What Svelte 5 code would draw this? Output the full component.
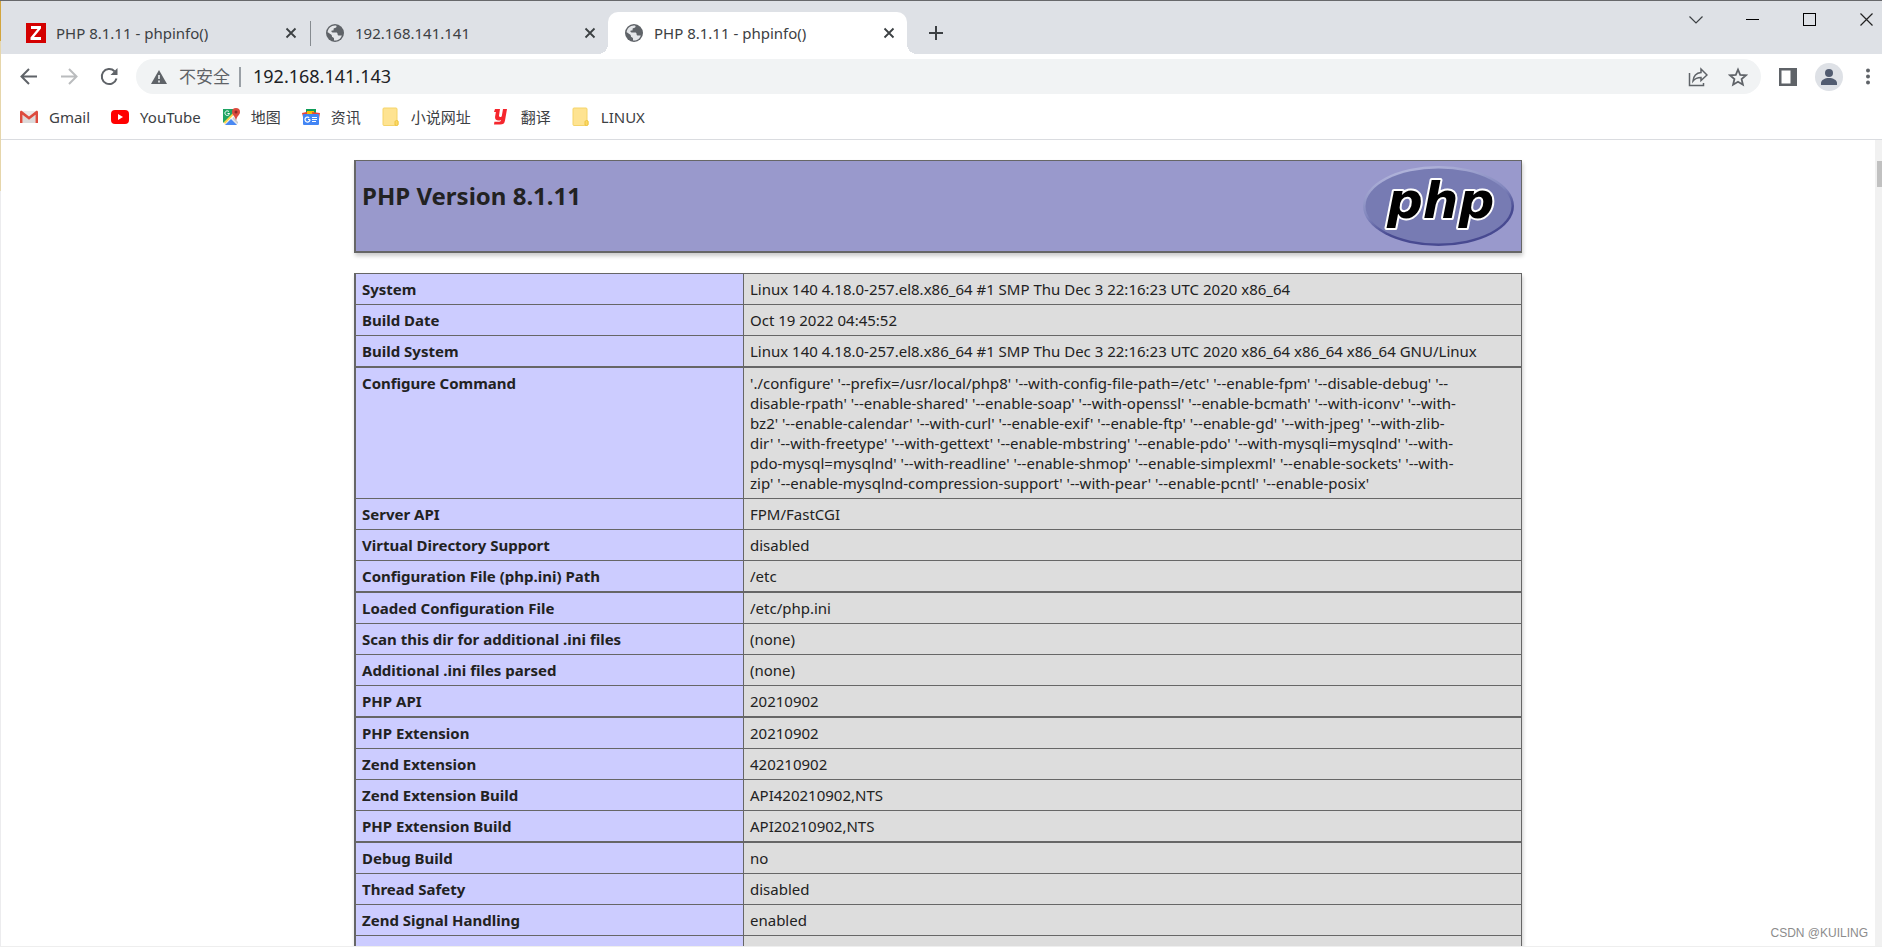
<script lang="ts">
	type Tab = { title: string; icon: 'zabbix' | 'globe'; active: boolean };
	type Bookmark = { label: string; icon: string };
	type Row = { name: string; value: string; thick?: boolean };

	let tabs: Tab[] = $state([
		{ title: 'PHP 8.1.11 - phpinfo()', icon: 'zabbix', active: false },
		{ title: '192.168.141.141', icon: 'globe', active: false },
		{ title: 'PHP 8.1.11 - phpinfo()', icon: 'globe', active: true }
	]);

	let address = $state('192.168.141.143');

	const bookmarks: Bookmark[] = [
		{ label: 'Gmail', icon: 'gmail' },
		{ label: 'YouTube', icon: 'youtube' },
		{ label: '地图', icon: 'maps' },
		{ label: '资讯', icon: 'news' },
		{ label: '小说网址', icon: 'folder' },
		{ label: '翻译', icon: 'youdao' },
		{ label: 'LINUX', icon: 'folder' }
	];

	const configure = [
		`'./configure' '--prefix=/usr/local/php8' '--with-config-file-path=/etc' '--enable-fpm' '--disable-debug' '--`,
		`disable-rpath' '--enable-shared' '--enable-soap' '--with-openssl' '--enable-bcmath' '--with-iconv' '--with-`,
		`bz2' '--enable-calendar' '--with-curl' '--enable-exif' '--enable-ftp' '--enable-gd' '--with-jpeg' '--with-zlib-`,
		`dir' '--with-freetype' '--with-gettext' '--enable-mbstring' '--enable-pdo' '--with-mysqli=mysqlnd' '--with-`,
		`pdo-mysql=mysqlnd' '--with-readline' '--enable-shmop' '--enable-simplexml' '--enable-sockets' '--with-`,
		`zip' '--enable-mysqlnd-compression-support' '--with-pear' '--enable-pcntl' '--enable-posix'`
	].join('\n');

	const rows: Row[] = [
		{ name: 'System', value: 'Linux 140 4.18.0-257.el8.x86_64 #1 SMP Thu Dec 3 22:16:23 UTC 2020 x86_64' },
		{ name: 'Build Date', value: 'Oct 19 2022 04:45:52' },
		{
			name: 'Build System',
			value: 'Linux 140 4.18.0-257.el8.x86_64 #1 SMP Thu Dec 3 22:16:23 UTC 2020 x86_64 x86_64 x86_64 GNU/Linux',
			thick: true
		},
		{ name: 'Configure Command', value: configure },
		{ name: 'Server API', value: 'FPM/FastCGI' },
		{ name: 'Virtual Directory Support', value: 'disabled' },
		{ name: 'Configuration File (php.ini) Path', value: '/etc', thick: true },
		{ name: 'Loaded Configuration File', value: '/etc/php.ini' },
		{ name: 'Scan this dir for additional .ini files', value: '(none)' },
		{ name: 'Additional .ini files parsed', value: '(none)' },
		{ name: 'PHP API', value: '20210902', thick: true },
		{ name: 'PHP Extension', value: '20210902' },
		{ name: 'Zend Extension', value: '420210902' },
		{ name: 'Zend Extension Build', value: 'API420210902,NTS' },
		{ name: 'PHP Extension Build', value: 'API20210902,NTS', thick: true },
		{ name: 'Debug Build', value: 'no' },
		{ name: 'Thread Safety', value: 'disabled' },
		{ name: 'Zend Signal Handling', value: 'enabled' },
		{ name: 'Zend Memory Manager', value: 'enabled' }
	];

	function selectTab(index: number) {
		tabs.forEach((tab, i) => (tab.active = i === index));
	}

	function closeTab(index: number) {
		tabs.splice(index, 1);
	}
</script>

{#snippet globe()}
	<svg width="18" height="18" viewBox="0 0 18 18">
		<circle cx="9" cy="9" r="9" fill="#5f6368" />
		<path
			d="M10.6 1.9c-.2 1.400-.6 1.900-1.800 2-1.100.1-1.300.6-1.200 1.500.1.900-.3 1.200-1.200 1.200-.8 0-1.100.5-.9 1.200.2.600.8.700 1.700.7h2.700c1.300 0 1.700.7 1.700 1.700s.5 1.200 1.500 1.200h2.700C15 14.500 12.200 16.500 9 16.500c-.3 0-.7 0-1-.1v-1.600c0-.8-.7-1.400-1.500-1.500-.6-.1-.8-.6-.8-1.300v-.9L1.600 8.300C1.900 4.500 5 1.500 9 1.500c.6 0 1.100.1 1.600.4z"
			fill="#e4e6e9"
		/>
		<path d="M2 8.500l3.500 3.300c.4.400.3 1 .8 1.400.5.400 1.200.3 1.200 1.100v1.700C4.300 15.400 1.700 12.300 2 8.500z" fill="#5f6368" />
	</svg>
{/snippet}

{#snippet bookmarkIcon(name: string)}
	<svg width="20" height="20" viewBox="0 0 20 20">
		{#if name === 'gmail'}
			<path d="M2 4h16v12H2z" fill="#eceaea" />
			<path d="M4 16V8l6 4.500L16 8v8z" fill="#dcdada" />
			<path d="M1 16V5c0-1 1.500-1.500 2.300-.8L10 9.500l6.700-5.300C17.500 3.500 19 4 19 5v11h-2.500V7.700L10 12.800 3.500 7.700V16z" fill="#dd4b3e" />
		{:else if name === 'youtube'}
			<rect x="1" y="3" width="18" height="14" rx="4" fill="#f00" />
			<path d="M8 7v6l5-3z" fill="#fff" />
		{:else if name === 'maps'}
			<path d="M2 2h14v16H2z" fill="#e8eaed" />
			<path d="M2 2h11L2 16z" fill="#1fa463" />
			<path d="M2 13L13 2l4 4L3 18H2z" fill="#fff" />
			<path d="M2 14L13 3l1.500 3L4 17z" fill="#fdd34c" />
			<path d="M2 2h10v4l-6 6-4 4z" fill="#1fa463" />
			<path d="M4 18l6-6 6 6z" fill="#4a89f3" />
			<path d="M12 10l5 5v2l-5-5z" fill="#c9ccd0" />
			<path d="M8.500 6.500H6.500M8 4.700A2.300 2.300 0 1 0 8.500 6.500" fill="none" stroke="#fff" />
			<path d="M15 1a4 4 0 0 1 4 4c0 3-3.200 4-4 8.500C14.200 9 11 8 11 5a4 4 0 0 1 4-4z" fill="#dc4b3e" />
			<circle cx="15" cy="5" r="1.500" fill="#8c2a22" />
		{:else if name === 'news'}
			<path d="M5 2h10v7H5z" fill="#0f9d58" />
			<path d="M1 6l9-2 2 6H2z" fill="#ea4335" />
			<path d="M6 4h7v4H6z" fill="#fbbc04" />
			<path d="M11 5l8 1-1 6h-6z" fill="#ea4335" />
			<rect x="2" y="7" width="16" height="11" rx="1" fill="#4285f4" />
			<path d="M9 12.500a2.500 2.500 0 1 1-.8-1.800M9 12.500H7M11 10.500h5M11 12.500h5M11 14.500h4" fill="none" stroke="#fff" stroke-width="1.200" />
		{:else if name === 'youdao'}
			<path d="M4 2h5L8 8.500c-.1 1 .3 1.400 1.200 1.400 1 0 1.500-.5 1.700-1.500L12 2h4l-2 11.500c-.5 3-2 4-5 4H3l.4-2.800h4.800c1.200 0 1.700-.5 1.900-1.700-1 .5-2 .6-3.100.5C4.600 13.200 3.800 11.500 4.100 9.500L4.900 5H3z" fill="#f5262d" />
		{:else}
			<path d="M3 1h12c.6 0 1 .4 1 1v11l1 1v3c0 1-.5 1.500-1.500 1.500H3c-.6 0-1-.4-1-1V2c0-.6.4-1 1-1z" fill="#fee391" stroke="#f5d469" />
			<path d="M14 18v-3c0-1 .8-1.500 1.500-1.500S17 14 17 15v2c0 1-.5 1.500-1.500 1.500z" fill="#fcd965" stroke="#eec43f" />
		{/if}
	</svg>
{/snippet}

<div class="browser">
	<header class="tab-strip">
		<div class="tabs" role="tablist">
			{#each tabs as tab, i}
				<div class="tab" class:active={tab.active}>
					<button class="tab-label" role="tab" aria-selected={tab.active} onclick={() => selectTab(i)}>
						<span class="favicon">
							{#if tab.icon === 'zabbix'}
								<svg width="20" height="20" viewBox="0 0 20 20">
									<rect width="20" height="20" fill="#d40000" />
									<path d="M5 3h10v2.500L8 14h7v3H4.500v-2.500L11.500 6H5z" fill="#fff" />
								</svg>
							{:else}
								{@render globe()}
							{/if}
						</span>
						{tab.title}
					</button>
					<button class="tab-close" aria-label="Close tab" onclick={() => closeTab(i)}>
						<svg width="12" height="12" viewBox="0 0 12 12">
							<path d="M1.500 1.500l9 9M10.500 1.500l-9 9" stroke="#3c4043" stroke-width="1.800" />
						</svg>
					</button>
				</div>
			{/each}
			<button class="new-tab" aria-label="New tab">
				<svg width="16" height="16" viewBox="0 0 16 16">
					<path d="M8 1v14M1 8h14" stroke="#3c4043" stroke-width="2" />
				</svg>
			</button>
		</div>
		<div class="window-controls">
			<button aria-label="Search tabs">
				<svg width="14" height="14" viewBox="0 0 14 14">
					<path d="M.5 3.500l6.500 6.500L13.500 3.500" fill="none" stroke="#3c4043" stroke-width="1.200" />
				</svg>
			</button>
			<button aria-label="Minimize">
				<svg width="14" height="14" viewBox="0 0 14 14"><path d="M0 6.500h13" stroke="#000" /></svg>
			</button>
			<button aria-label="Maximize">
				<svg width="14" height="14" viewBox="0 0 14 14">
					<rect x=".5" y=".5" width="12" height="12" fill="none" stroke="#000" />
				</svg>
			</button>
			<button class="close" aria-label="Close">
				<svg width="14" height="14" viewBox="0 0 14 14">
					<path d="M.5.5l12 12M12.500.5l-12 12" stroke="#222" stroke-width="1.200" />
				</svg>
			</button>
		</div>
	</header>

	<div class="toolbar">
		<button class="nav" aria-label="Back">
			<svg width="20" height="20" viewBox="0 0 20 20">
				<path d="M18 9.500H3M10 2L2.500 9.500 10 17" fill="none" stroke="#5f6368" stroke-width="2" />
			</svg>
		</button>
		<button class="nav" aria-label="Forward" disabled>
			<svg width="20" height="20" viewBox="0 0 20 20">
				<path d="M2 9.500h15M10 2l7.500 7.500L10 17" fill="none" stroke="#babcbe" stroke-width="2" />
			</svg>
		</button>
		<button class="nav" aria-label="Reload">
			<svg width="20" height="20" viewBox="0 0 20 20">
				<path d="M17.500 11.500A7.500 7.500 0 1 1 15.500 4.200" fill="none" stroke="#5f6368" stroke-width="2" />
				<path d="M18.500 1v7h-7z" fill="#5f6368" />
			</svg>
		</button>
		<div class="omnibox">
			<button class="security">
				<svg width="16" height="16" viewBox="0 0 16 16">
					<path d="M8 1l8 14H0z" fill="#5f6368" />
					<path d="M8 6v4M8 11.500v2" stroke="#f1f3f4" stroke-width="1.600" />
				</svg>
				不安全
			</button>
			<input class="url" type="text" aria-label="Address" bind:value={address} />
			<button class="page-action" aria-label="Share">
				<svg width="20" height="20" viewBox="0 0 20 20">
					<path d="M1.500 6v12.500h14V16" fill="none" stroke="#5f6368" stroke-width="1.500" />
					<path d="M13 2l6 6-6 5.500V10.500c-4 0-6 1-8 3.500.4-4 2.500-8 8-8.500z" fill="none" stroke="#5f6368" stroke-width="1.500" />
				</svg>
			</button>
			<button class="page-action" aria-label="Bookmark this page">
				<svg width="20" height="20" viewBox="0 0 20 20">
					<path d="M10 2.500l2.200 5.300 5.800.5-4.400 3.800 1.300 5.600-4.900-3-4.900 3 1.300-5.600L2 8.300l5.800-.5z" fill="none" stroke="#5f6368" stroke-width="1.800" />
				</svg>
			</button>
		</div>
		<button class="nav side" aria-label="Side panel">
			<svg width="18" height="18" viewBox="0 0 18 18">
				<path d="M0 0h18v18H0zM2.500 2.500v13h9v-13z" fill="#5f6368" fill-rule="evenodd" />
			</svg>
		</button>
		<button class="nav" aria-label="Profile">
			<svg width="28" height="28" viewBox="0 0 28 28">
				<circle cx="14" cy="14" r="14" fill="#dee1e6" />
				<circle cx="14" cy="10" r="4" fill="#525c70" />
				<path d="M6 22v-2c0-3 4-5 8-5s8 2 8 5v2z" fill="#525c70" />
			</svg>
		</button>
		<button class="menu" aria-label="Menu">
			<svg width="12" height="20" viewBox="0 0 12 20">
				<circle cx="6" cy="3.500" r="2" fill="#5f6368" />
				<circle cx="6" cy="9.500" r="2" fill="#5f6368" />
				<circle cx="6" cy="15.500" r="2" fill="#5f6368" />
			</svg>
		</button>
	</div>

	<nav class="bookmarks">
		{#each bookmarks as bookmark}
			<a href="#{bookmark.icon}">
				{@render bookmarkIcon(bookmark.icon)}
				{bookmark.label}
			</a>
		{/each}
	</nav>

	<div class="viewport">
		<main class="page">
			<div class="banner">
				<h1>PHP Version 8.1.11</h1>
				<svg class="php-logo" width="151" height="80" viewBox="0 0 151 80">
					<defs>
						<linearGradient id="rim" x1="0.3" y1="0" x2="0.7" y2="1">
							<stop offset="0" stop-color="#b4b7dc" />
							<stop offset="0.45" stop-color="#8186bd" />
							<stop offset="0.7" stop-color="#484a91" />
							<stop offset="1" stop-color="#484a91" />
						</linearGradient>
					</defs>
					<ellipse cx="75.500" cy="40" rx="75.500" ry="40" fill="url(#rim)" />
					<ellipse cx="75.500" cy="40" rx="73" ry="37.500" fill="#777bb3" />
					<text x="24" y="52">php</text>
				</svg>
			</div>

			<table>
				<tbody>
					{#each rows as row}
						<tr class:thick={row.thick}>
							<th scope="row">{row.name}</th>
							<td>{row.value}</td>
						</tr>
					{/each}
				</tbody>
			</table>
		</main>
		<div class="scrollbar"><div class="thumb"></div></div>
		<span class="watermark">CSDN @KUILING</span>
	</div>
</div>

<style>
	:global(body) {
		background: #fff;
		overflow: hidden;
	}

	.browser {
		box-sizing: border-box;
		height: 100vh;
		display: flex;
		flex-direction: column;
		border-top: 1px solid #67686b;
		border-bottom: 1px solid #eee;
		font-family: 'Noto Sans', 'Noto Sans CJK SC', sans-serif;
		font-size: 15px;
		color: #3c4043;
		/* sliver of the desktop that shows beside the window */
		background: linear-gradient(#d2a53e 0 40px, #e6d6ab 40px 190px, #ececee 190px) no-repeat 0 0 / 1px 100%;
		padding-left: 1px;
	}

	button {
		display: flex;
		align-items: center;
		justify-content: center;
		padding: 0;
		border: none;
		background: none;
		font: inherit;
		color: inherit;
	}

	svg {
		display: block;
		flex: none;
	}

	/* Tab strip */
	.tab-strip {
		display: flex;
		justify-content: space-between;
		background: #dee1e6;
		height: 53px;
	}

	.tabs {
		display: flex;
		align-items: flex-end;
		padding-left: 9px;
	}

	.tab {
		position: relative;
		box-sizing: border-box;
		width: 299px;
		height: 42px;
		display: flex;
		align-items: center;
		padding: 0 12px 0 16px;
		border-radius: 10px 10px 0 0;
	}

	.tab:first-child::after {
		content: '';
		position: absolute;
		right: -2px;
		top: 9px;
		width: 1px;
		height: 25px;
		background: #868b90;
	}

	.tab.active {
		background: #fff;
	}

	.tab.active::before,
	.tab.active::after {
		content: '';
		position: absolute;
		bottom: 0;
		width: 10px;
		height: 10px;
	}

	.tab.active::before {
		left: -10px;
		background: radial-gradient(circle at 0 0, #dee1e6 10px, #fff 10px);
	}

	.tab.active::after {
		right: -10px;
		background: radial-gradient(circle at 100% 0, #dee1e6 10px, #fff 10px);
	}

	.tab-label {
		flex: 1;
		justify-content: flex-start;
		gap: 10px;
		line-height: 20px;
	}

	.favicon {
		width: 20px;
		display: flex;
		justify-content: center;
	}

	.new-tab {
		width: 58px;
		height: 42px;
	}

	.window-controls {
		display: flex;
		height: 38px;
	}

	.window-controls button {
		width: 57px;
	}

	.window-controls .close {
		width: 44px;
		padding: 0 8px 0 22px;
	}

	/* Toolbar */
	.toolbar {
		display: flex;
		align-items: center;
		height: 45px;
		padding-left: 8px;
	}

	.nav {
		width: 40px;
		height: 35px;
	}

	.side {
		margin: 0 1px 0 7px;
	}

	.menu {
		width: 33px;
		height: 35px;
		padding: 0 8px 0 13px;
	}

	.omnibox {
		flex: 1;
		display: flex;
		align-items: center;
		height: 35px;
		margin-left: 7px;
		padding-right: 3px;
		border-radius: 18px;
		background: #f1f3f4;
	}

	.security {
		height: 20px;
		gap: 12px;
		margin-left: 15px;
		padding-right: 9px;
		border-right: 2px solid #9aa0a6;
		font-size: 17px;
		line-height: 20px;
		color: #5f6368;
	}

	.url {
		flex: 1;
		min-width: 0;
		padding: 0 0 2px 12px;
		border: none;
		outline: none;
		background: none;
		font: inherit;
		font-size: 18px;
		line-height: 24px;
		color: #202124;
	}

	.page-action {
		width: 40px;
	}

	/* Bookmarks */
	.bookmarks {
		display: flex;
		align-items: center;
		gap: 20px;
		height: 36px;
		padding: 0 18px 4px;
		border-bottom: 1px solid #dadce0;
	}

	.bookmarks a {
		display: flex;
		align-items: center;
		gap: 10px;
		color: #3c4043;
		text-decoration: none;
		line-height: 20px;
	}

	/* Page */
	.viewport {
		position: relative;
		flex: 1;
		min-height: 0;
		display: flex;
		background: #fff;
		overflow: hidden;
	}

	.page {
		flex: 1;
		padding: 20px 20px 0;
		color: #222;
	}

	.banner,
	table {
		box-sizing: border-box;
		width: 100%;
		max-width: 1168px;
		margin: 0 auto 20px;
		box-shadow: 1px 3px 4px #ccc;
	}

	.banner {
		display: flex;
		justify-content: space-between;
		padding: 5px 7px 5px 6px;
		border: 1px solid #666;
		border-left-width: 2px;
		border-bottom-width: 2px;
		background: #99c;
	}

	h1 {
		margin: 14px 0 0;
		font-size: 24px;
		line-height: 32px;
	}

	.php-logo {
		overflow: visible;
	}

	.php-logo text {
		font: italic bold 50px 'DejaVu Sans', sans-serif;
		fill: #000;
		stroke: #fff;
		stroke-width: 4px;
		stroke-linejoin: round;
		paint-order: stroke;
	}

	table {
		border-spacing: 0;
		border-top: 1px solid #666;
		line-height: 20px;
	}

	th,
	td {
		padding: 5px 6px;
		border-right: 1px solid #666;
		border-bottom: 1px solid #666;
		vertical-align: top;
		text-align: left;
	}

	th {
		box-sizing: border-box;
		width: 390px;
		border-left: 2px solid #666;
		background: #ccf;
	}

	td {
		background: #ddd;
		white-space: pre-line;
	}

	.thick th,
	.thick td {
		border-bottom-width: 2px;
	}

	.scrollbar {
		width: 7px;
		padding: 21px 0 0 2px;
		box-sizing: border-box;
		background: #f1f1f1;
	}

	.thumb {
		height: 26px;
		background: #c1c1c1;
	}

	.watermark {
		position: absolute;
		right: 14px;
		bottom: 3px;
		font: 12px/20px 'Liberation Sans', sans-serif;
		color: #8c8c8c;
	}
</style>
